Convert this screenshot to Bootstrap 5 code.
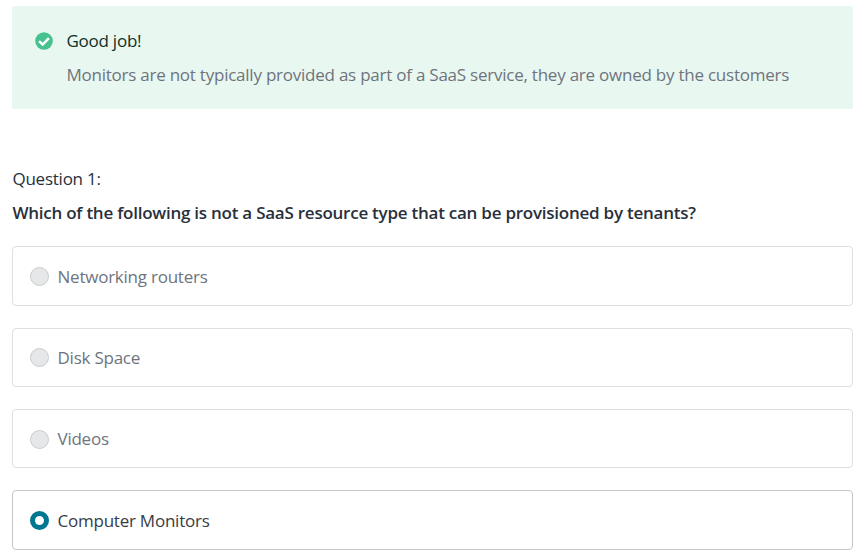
<!DOCTYPE html>
<html lang="en">
<head>
<meta charset="utf-8">
<meta name="viewport" content="width=device-width, initial-scale=1">
<title>Quiz question</title>
<link href="https://cdn.jsdelivr.net/npm/bootstrap@5.3.0/dist/css/bootstrap.min.css" rel="stylesheet">
<style>
body{font-family:"Open Sans",sans-serif;font-size:17px;line-height:34px;color:#6e747d;letter-spacing:-.235px;overflow:hidden;background:#fff}
.quiz{padding:6px 7px 0 12px}
.feedback{background:#e9f7f1;height:103px;padding:18px 23px;border-radius:2px}
.feedback svg{margin-top:8px;margin-right:13.4px}
.ink{color:#29303b}
.feedback .ink{color:#0c3026}
.question{margin-top:53px;margin-bottom:16.4px;padding-left:.4px}
.prompt{font-weight:600;color:#29303b;letter-spacing:-.245px}
.answers{gap:22px}
.answer{height:59.33px;border:1px solid #dedfe0;border-radius:4px;padding:0 17px}
.answer span{padding-top:1px}
.answer.chosen{border-color:#c5c6c7;color:#363d47}
.quiz .form-check-input{width:19px;height:19px;margin:1px 8.5px 0 0;background-color:#e6e7e9;border:1px solid #cacbcc;opacity:1}
.quiz .form-check-input:checked{background:#fff;border:5px solid #007791}
</style>
</head>
<body>
<main class="quiz">
<section class="feedback d-flex align-items-start" role="status">
<svg width="18" height="18" viewBox="0 0 18 18" aria-hidden="true"><circle cx="9" cy="9" r="8.8" fill="#46c28e"/><path d="M4 9.1 7.7 12.5 13.9 6.1" fill="none" stroke="#fff" stroke-width="2.5"/></svg>
<div><div class="ink">Good job!</div><div>Monitors are not typically provided as part of a SaaS service, they are owned by the customers</div></div>
</section>
<form>
<div class="question"><div class="ink">Question 1:</div><div class="prompt">Which of the following is not a SaaS resource type that can be provisioned by tenants?</div></div>
<div class="answers d-flex flex-column">
<label class="answer d-flex align-items-center"><input class="form-check-input" type="radio" name="a"><span>Networking routers</span></label>
<label class="answer d-flex align-items-center"><input class="form-check-input" type="radio" name="a"><span>Disk Space</span></label>
<label class="answer d-flex align-items-center"><input class="form-check-input" type="radio" name="a"><span>Videos</span></label>
<label class="answer chosen d-flex align-items-center"><input class="form-check-input" type="radio" name="a" checked><span>Computer Monitors</span></label>
</div>
</form>
</main>
<script src="https://cdn.jsdelivr.net/npm/bootstrap@5.3.0/dist/js/bootstrap.bundle.min.js"></script>
</body>
</html>
